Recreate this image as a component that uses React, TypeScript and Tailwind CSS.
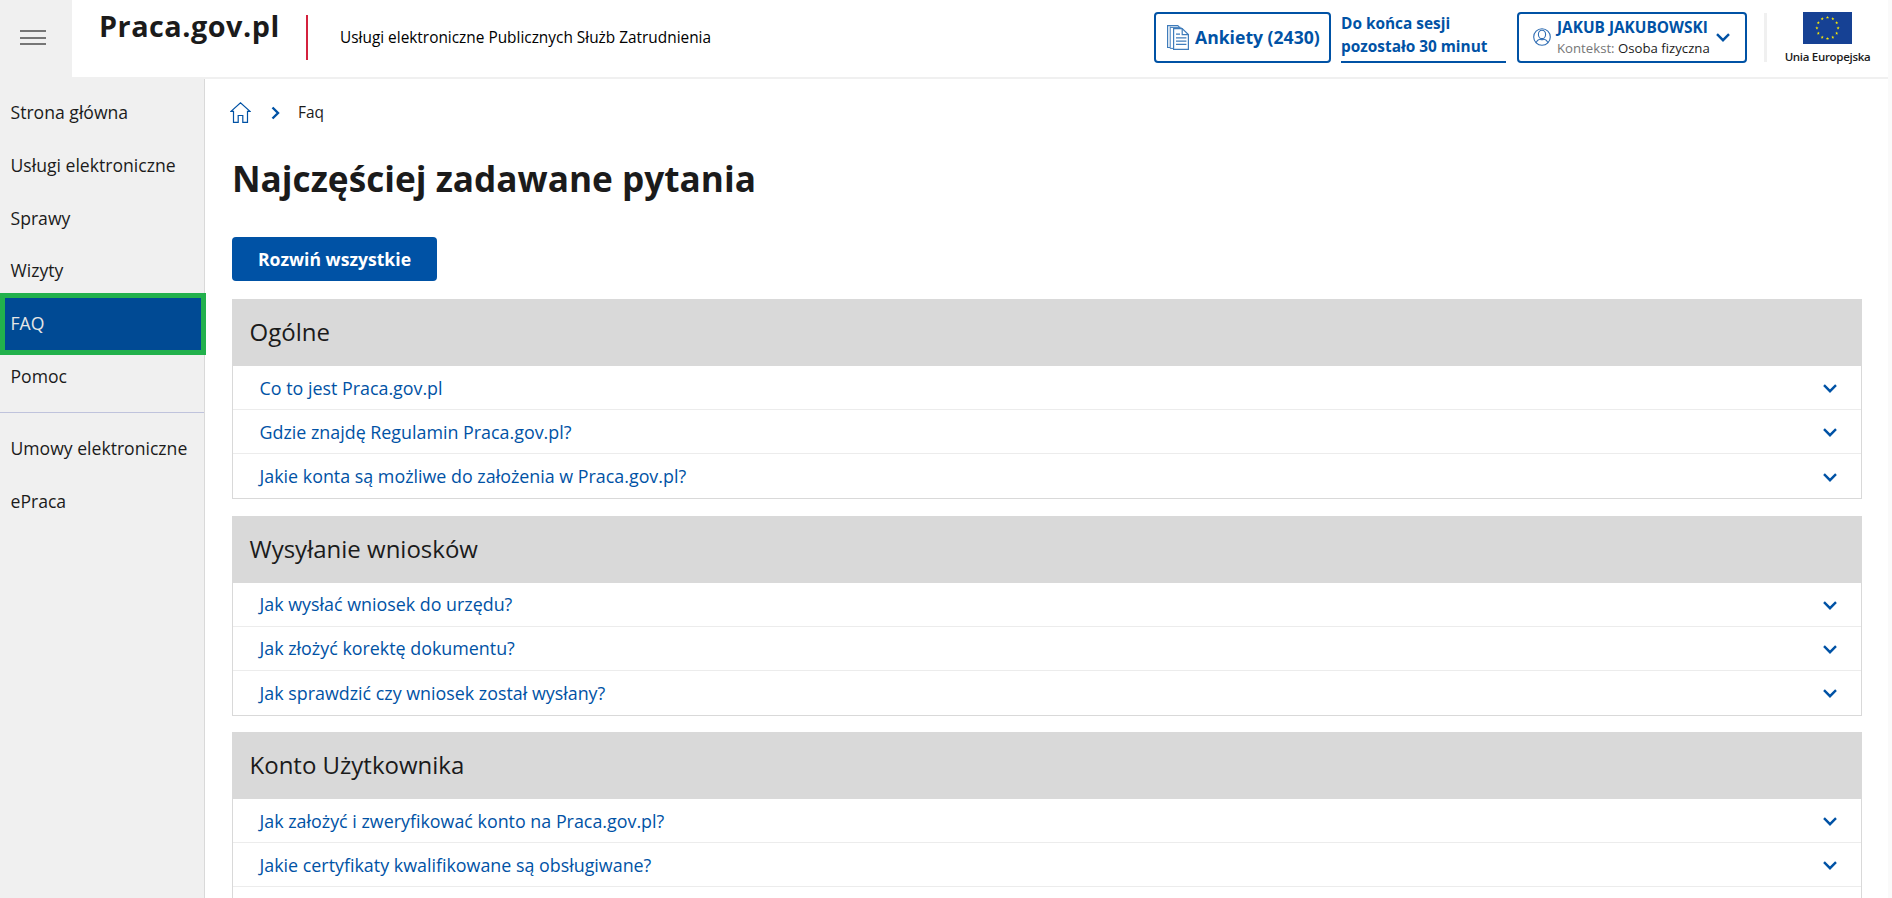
const menu = ['Strona główna', 'Usługi elektroniczne', 'Sprawy', 'Wizyty', 'FAQ', 'Pomoc'];
const menuBottom = ['Umowy elektroniczne', 'ePraca'];

const sections = [
  {
    title: 'Ogólne',
    items: [
      'Co to jest Praca.gov.pl',
      'Gdzie znajdę Regulamin Praca.gov.pl?',
      'Jakie konta są możliwe do założenia w Praca.gov.pl?',
    ],
  },
  {
    title: 'Wysyłanie wniosków',
    items: [
      'Jak wysłać wniosek do urzędu?',
      'Jak złożyć korektę dokumentu?',
      'Jak sprawdzić czy wniosek został wysłany?',
    ],
  },
  {
    title: 'Konto Użytkownika',
    items: [
      'Jak założyć i zweryfikować konto na Praca.gov.pl?',
      'Jakie certyfikaty kwalifikowane są obsługiwane?',
      '',
    ],
  },
];

function ChevronDown() {
  return (
    <svg width="14" height="9" viewBox="0 0 14 9" fill="none" stroke="#0052a5" strokeWidth="2.4">
      <path d="M1 1.2 7 7.2 13 1.2" />
    </svg>
  );
}

function DocsIcon() {
  return (
    <svg width="22" height="25" viewBox="0 0 22 25" fill="none" stroke="#3f7cbb" strokeWidth="1.2">
      <path d="M3 22.5H.6V.6h10.2l2 2" />
      <path d="M6 23.4H3.2V1.6M3.2 2.4h10.4l2 1.6" strokeWidth="1" />
      <path d="M6.6 3.6h8.6l6.2 6v14.8H6.6z" />
      <path d="M15.2 3.6v6h6.2M9 9.2h4M9 12.8h10.4M9 16.2h10.4M9 19.4h10.4" />
    </svg>
  );
}

function UserIcon() {
  return (
    <svg width="18" height="18" viewBox="0 0 18 18" fill="none" stroke="#2f6db3" strokeWidth="1.1">
      <circle cx="9" cy="9" r="8.3" />
      <ellipse cx="9" cy="6.4" rx="3.6" ry="4.2" />
      <path d="M3 14.8c.8-2.2 2.4-3.2 4.2-3.8.9.8 2.7.8 3.6 0 1.8.6 3.4 1.6 4.2 3.8" />
    </svg>
  );
}

function EuFlag() {
  const stars = Array.from({ length: 12 }, (_, i) => (i * Math.PI) / 6);
  return (
    <svg width="49" height="32" viewBox="0 0 49 32">
      <rect width="49" height="32" fill="#164194" />
      {stars.map((a) => (
        <path
          key={a}
          transform={`translate(${24.5 + 10.6 * Math.sin(a)} ${16 - 10.6 * Math.cos(a)})`}
          d="M0-1.7.4-.5 1.6-.5.6.3 1 1.5 0 .7-1 1.5-.6.3-1.6-.5-.4-.5z"
          fill="#ffed00"
        />
      ))}
    </svg>
  );
}

function Header() {
  return (
    <header className="flex h-[79px] items-start border-b-2 border-[#f0f0f0] bg-white">
      <button className="flex h-[77px] w-[72px] flex-col gap-1 bg-[#f0f0f0] pt-[30px] pl-5">
        <span className="mb-px h-0.5 w-[26px] bg-[#767676]" />
        <span className="h-0.5 w-[26px] bg-[#767676]" />
        <span className="h-0.5 w-[26px] bg-[#767676]" />
      </button>
      <div className="ml-[27px] w-[207px] pt-1.5 text-[28.8px] leading-[40px] font-bold tracking-[0.5px]">
        Praca.gov.pl
      </div>
      <div className="mt-[15px] h-[45px] w-0.5 bg-[#d4213d]" />
      <div className="ml-8 pt-[26px] text-[15.4px] leading-6 text-black">
        Usługi elektroniczne Publicznych Służb Zatrudnienia
      </div>

      <div className="mt-3 ml-auto flex">
        <button className="flex h-[51px] w-[177px] items-center rounded border-2 border-[#0052a5] pl-[11px] text-[17.6px] font-bold text-[#0052a5]">
          <DocsIcon />
          <span className="ml-1.5">Ankiety (2430)</span>
        </button>
        <div className="ml-2.5 h-[51px] w-[165px] border-b-2 border-[#0052a5] text-[15.4px] leading-[23px] font-bold text-[#0052a5]">
          <div>Do końca sesji</div>
          <div>pozostało 30 minut</div>
        </div>
        <button className="ml-[11px] flex h-[51px] w-[230px] items-center rounded border-2 border-[#0052a5] pl-3.5 text-left">
          <span className="pb-px">
            <UserIcon />
          </span>
          <span className="ml-1.5 w-[159px]">
            <span className="block pt-px text-[15.4px] leading-5 font-bold text-[#0052a5]">JAKUB JAKUBOWSKI</span>
            <span className="block text-[13.2px] leading-5 text-[#767676]">
              Kontekst: <span className="text-[#1b1b1b]">Osoba fizyczna</span>
            </span>
          </span>
          <ChevronDown />
        </button>
        <div className="mt-px ml-[17px] h-[49px] w-[3px] bg-[#f0f0f0]" />
        <div className="mr-[18px] ml-[18px] flex w-[85px] flex-col items-center">
          <EuFlag />
          <span className="mt-1 text-[11.5px] leading-[18px] font-semibold tracking-[-0.3px] whitespace-nowrap">
            Unia Europejska
          </span>
        </div>
      </div>
    </header>
  );
}

function Sidebar() {
  return (
    <nav className="w-[205px] shrink-0 border-r border-[#d9d9d9] bg-[#f0f0f0] pt-[7.4px] text-[17.6px]">
      {menu.map((label) =>
        label === 'FAQ' ? (
          <div key={label} className="relative flex h-[52.8px] items-center bg-[#004a94] pb-0.5 pl-[10.5px] text-[#e6e6e6]">
            {label}
            <div className="absolute -top-[5px] left-0 h-[62px] w-[206px] border-5 border-[#22b14c]" />
          </div>
        ) : (
          <div key={label} className="flex h-[52.8px] items-center pb-px pl-[10.5px]">
            {label}
          </div>
        )
      )}
      <hr className="mt-[9px] mb-[9px] border-[#bfc3dc]" />
      {menuBottom.map((label) => (
        <div key={label} className="flex h-[52.8px] items-center pb-px pl-[10.5px]">
          {label}
        </div>
      ))}
    </nav>
  );
}

export default function App() {
  return (
    <div className="h-[898px] overflow-hidden bg-[#fafafa] pr-1 font-['Open_Sans',sans-serif] text-[#1b1b1b]">
      <Header />
      <div className="flex h-[819px] overflow-hidden bg-white">
        <Sidebar />
        <main className="flex-1 pr-[26px] pl-[27px]">
          <div className="-ml-0.5 flex h-[45px] items-center pt-[22px]">
            <svg width="21" height="21" viewBox="0 0 21 21" fill="none" stroke="#0052a5" strokeWidth="1.2">
              <path d="M3.5 9.3H1L10.5.8 20 9.3h-2.5v11h-4.7v-6.8H8.2v6.8H3.5z" />
            </svg>
            <svg className="ml-5" width="9" height="14" viewBox="0 0 9 14" fill="none" stroke="#0052a5" strokeWidth="2.4">
              <path d="M1.5 1.5 7 7 1.5 12.5" />
            </svg>
            <span className="ml-[18px] text-[15.4px]">Faq</span>
          </div>
          <h1 className="mt-[30px] text-[35.2px] leading-[48px] font-bold">Najczęściej zadawane pytania</h1>
          <button className="mt-[35px] block h-11 w-[205px] rounded bg-[#0052a5] text-[17.6px] font-bold text-white">
            Rozwiń wszystkie
          </button>
          <div className="mt-[18px]">
            {sections.map((section) => (
              <section key={section.title} className="mb-[17.5px] h-[199px]">
                <h2 className="flex h-[67px] items-center bg-[#d9d9d9] pb-px pl-[17.5px] text-2xl">{section.title}</h2>
                <div className="border border-t-0 border-[#d9d9d9]">
                  {section.items.map((item) => (
                    <div
                      key={item}
                      className="flex h-11 items-center justify-between border-b border-[#ececec] pr-6 pl-[26.5px] text-[17.88px] text-[#0052a5] last:h-[44px] last:border-b-0"
                    >
                      <span className="pt-px">{item}</span>
                      <span className="pt-0.5">
                        <ChevronDown />
                      </span>
                    </div>
                  ))}
                </div>
              </section>
            ))}
          </div>
        </main>
      </div>
    </div>
  );
}
